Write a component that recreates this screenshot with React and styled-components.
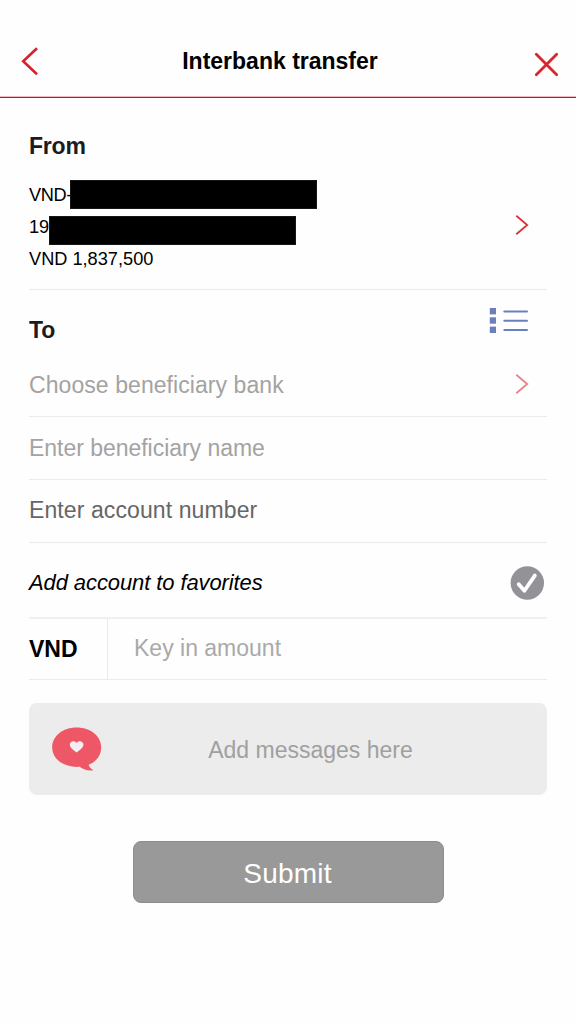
import React from 'react';
import styled, { createGlobalStyle } from 'styled-components';

const GlobalStyle = createGlobalStyle`
  * {
    box-sizing: border-box;
  }
  body {
    margin: 0;
    background: #fefefe;
    color: #000;
    font-family: "Liberation Sans", Arial, sans-serif;
  }
`;
const Screen = styled.div`
  display: flex;
  flex-direction: column;
  width: 576px;
  height: 1024px;
  overflow: hidden;
`;
const Header = styled.header`
  display: grid;
  grid-template-columns: 60px 1fr 76px;
  height: 98px;
  padding-top: 26px;
  border-bottom: 1px solid #d0121b;
  box-shadow: inset 0 -1px 0 #f3b9bc;
`;
const HeaderIcon = styled.div`
  display: flex;
  align-items: center;
  justify-content: ${props => props.$end ? 'flex-end' : 'flex-start'};
  padding: ${props => props.$end ? '6px 16px 0 0' : '0 0 1px 20px'};
`;
const Title = styled.h1`
  margin: 0;
  font-size: 23px;
  line-height: 70px;
  text-align: center;
`;
const Form = styled.main`
  display: flex;
  flex-direction: column;
  padding: 0 29px;
`;
const Section = styled.section`
  display: flex;
  flex-direction: column;
  height: 192px;
  padding-top: 33px;
  border-bottom: 1px solid #ebebeb;
`;
const SectionTitle = styled.h2`
  margin: 0;
  color: #1c1c1e;
  font-size: 23px;
  line-height: 30px;
  letter-spacing: -0.2px;
`;
const Account = styled.div`
  display: flex;
  justify-content: space-between;
  margin-top: 18px;
  padding-right: 18px;
`;
const AccountLine = styled.div`
  display: flex;
  height: 32px;
  font-size: 18.2px;
  line-height: 32px;
  letter-spacing: ${props => props.$spacing || 0}px;
`;
const Prefix = styled.span`
  width: ${props => props.$width}px;
  white-space: nowrap;
`;
const Mask = styled.span`
  z-index: 1;
  width: 247px;
  height: 29px;
  margin-top: ${props => props.$top}px;
  background: #000;
  box-shadow: inset 0 0 0 1px #161616;
`;
const ToRow = styled.div`
  display: flex;
  justify-content: space-between;
  height: 63px;
  padding: 25px 19px 0 0;
`;
const ListIcon = styled.svg`
  margin-top: -8px;
`;
const Field = styled.div`
  display: flex;
  align-items: center;
  justify-content: space-between;
  height: ${props => props.$height || 63}px;
  padding-right: 18px;
  border-bottom: 1px solid #ebebeb;
  color: ${props => props.$color || '#a3a3a3'};
  font-size: 23px;
  letter-spacing: ${props => props.$spacing || 0}px;
`;
const FieldText = styled.span`
  padding: ${props => props.$shift || '0'};
`;
const ChevronIcon = styled.svg`
  flex: none;
  margin: ${props => props.$margin};
`;
const Favorite = styled.div`
  display: flex;
  align-items: center;
  justify-content: space-between;
  height: 76px;
  padding: 5px 3px 0 0;
  border-bottom: 2px solid #f0f0f0;
  font-size: 22px;
  font-style: italic;
  letter-spacing: -0.1px;
`;
const Amount = styled.div`
  display: flex;
  height: 61px;
  border-bottom: 1px solid #ebebeb;
  font-size: 23px;
  line-height: 59px;
`;
const Currency = styled.div`
  width: 79px;
  border-right: 1px solid #e9e9e9;
  font-weight: bold;
  line-height: 61px;
`;
const AmountInput = styled.div`
  padding-left: 26px;
  color: #a9a9a9;
`;
const Message = styled.div`
  display: flex;
  align-items: center;
  height: 92px;
  margin-top: 23px;
  padding-left: 22px;
  border-radius: 8px;
  background: #ececec;
`;
const MessageText = styled.span`
  flex: 1;
  padding: 2px 29px 0 0;
  color: #a0a0a0;
  font-size: 23px;
  text-align: center;
`;
const Submit = styled.button`
  align-self: center;
  width: 311px;
  height: 62px;
  margin: 46px 0 0 1px;
  padding: 3px 2px 0 0;
  border: 1px solid #8e8e8e;
  border-radius: 8px;
  background: #999;
  color: #fff;
  font-family: inherit;
  font-size: 28px;
  letter-spacing: 0.2px;
`;

const Chevron = ({ color, margin }) => (
  <ChevronIcon $margin={margin} width="14" height="22" viewBox="0 0 14 22" fill="none" stroke={color} strokeWidth="1.8">
    <path d="M1.3 1.7 12.2 11 1.3 20.3" />
  </ChevronIcon>
);

const accountLines = [
  { text: 'VND-', width: 41, top: 1, spacing: -0.4 },
  { text: '19', width: 20, top: 5 }
];

export default class App extends React.Component {
  render () {
    return (
      <Screen>
        <GlobalStyle />
        <Header>
          <HeaderIcon>
            <svg width="20" height="30" viewBox="0 0 20 30" fill="none" stroke="#d9202a" strokeWidth="2.6">
              <path d="M17 2.3 3.2 15.3 17 28.3" />
            </svg>
          </HeaderIcon>
          <Title>Interbank transfer</Title>
          <HeaderIcon $end>
            <svg width="26" height="26" viewBox="0 0 26 26" fill="none" stroke="#d9262e" strokeWidth="2.8" strokeLinecap="round">
              <path d="M2.3 2.3 22.7 22.7M22.7 2.3 2.3 22.7" />
            </svg>
          </HeaderIcon>
        </Header>
        <Form>
          <Section>
            <SectionTitle>From</SectionTitle>
            <Account>
              <div>
                {accountLines.map(line => (
                  <AccountLine key={line.text} $spacing={line.spacing}>
                    <Prefix $width={line.width}>{line.text}</Prefix>
                    <Mask $top={line.top} />
                  </AccountLine>
                ))}
                <AccountLine>VND 1,837,500</AccountLine>
              </div>
              <Chevron color="#d9333b" margin="35px 0 0" />
            </Account>
          </Section>
          <ToRow>
            <SectionTitle>To</SectionTitle>
            <ListIcon width="39" height="28" viewBox="0 0 39 28">
              {[1, 10.3, 19.6].map(y => (
                <g key={y} fill="#6b7fbd">
                  <rect x="0.8" y={y} width="6.2" height="6.4" />
                  <rect x="14.3" y={y + 2.4} width="24.7" height="2" rx="1" />
                </g>
              ))}
            </ListIcon>
          </ToRow>
          <Field $height={64} $spacing={0.07}>
            <FieldText $shift="2px 0 0">Choose beneficiary bank</FieldText>
            <Chevron color="#e5848a" margin="0 0 1px" />
          </Field>
          <Field $spacing={-0.03}>
            <FieldText>Enter beneficiary name</FieldText>
          </Field>
          <Field $color="#666" $spacing={0.1}>
            <FieldText $shift="0 0 2px">Enter account number</FieldText>
          </Field>
          <Favorite>
            <FieldText $shift="1px 0 0">Add account to favorites</FieldText>
            <svg width="34" height="34" viewBox="0 0 34 34">
              <circle cx="17.3" cy="17" r="16.7" fill="#929297" />
              <path d="M8.7 18.2 14.4 24.8 24.8 9.6" fill="none" stroke="#fff" strokeWidth="3.8" strokeLinecap="round" strokeLinejoin="round" />
            </svg>
          </Favorite>
          <Amount>
            <Currency>VND</Currency>
            <AmountInput>Key in amount</AmountInput>
          </Amount>
          <Message>
            <svg width="52" height="46" viewBox="0 0 52 46">
              <path d="M25.6 1.6C39.4 1.6 50.2 10 50.2 21.4C50.2 29 45.4 35.6 37.6 38.8C38.4 41.2 40 43 42.6 44.2C37.6 45.2 32.6 43.8 28.6 40.8C13.4 42 1.2 33.2 1.2 21.4C1.2 10 12 1.6 25.6 1.6Z" fill="#ee5866" />
              <path d="M25.6 26.6C21 23.4 18.8 21.2 18.8 18.6C18.8 15 23.6 14 25.6 17C27.6 14 32.4 15 32.4 18.6C32.4 21.2 30.2 23.4 25.6 26.6Z" fill="#f3eff0" />
            </svg>
            <MessageText>Add messages here</MessageText>
          </Message>
          <Submit>Submit</Submit>
        </Form>
      </Screen>
    );
  }
}
